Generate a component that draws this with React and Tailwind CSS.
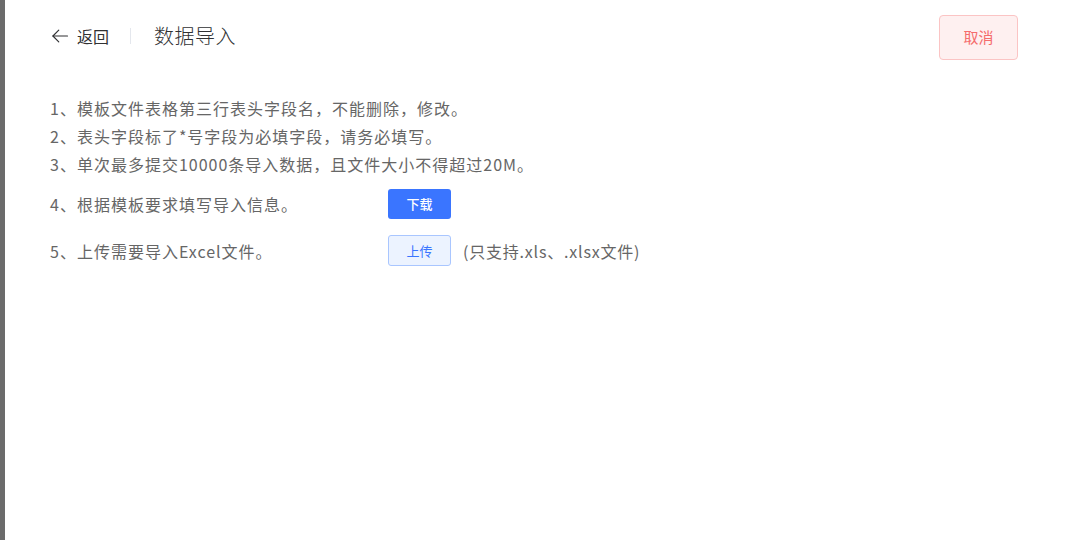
import React from "react";

const font = { fontFamily: '"Noto Sans CJK SC", "Noto Sans", sans-serif' };

function BackArrow() {
    return (
        <svg width="20" height="20" viewBox="0 0 24 24" fill="none" stroke="#303133" strokeWidth="1.4" strokeLinecap="round" strokeLinejoin="round">
            <path d="M21 12H3.5" />
            <path d="M10.5 5l-7 7 7 7" />
        </svg>
    );
}

export default function App() {
    const rules = [
        "1、模板文件表格第三行表头字段名，不能删除，修改。",
        "2、表头字段标了*号字段为必填字段，请务必填写。",
        "3、单次最多提交10000条导入数据，且文件大小不得超过20M。",
    ];

    return (
        <div className="flex w-[1065px] h-[540px] bg-white" style={font}>
            {/* mask edge */}
            <div className="w-[5px] h-full bg-[#6b6b6b]"></div>

            <div className="flex-1 flex flex-col">
                {/* Header */}
                <div className="flex items-center h-[72px] pl-[45px] pr-[47px]">
                    <button className="flex items-center gap-[7px] text-[16px] text-[#303133]">
                        <BackArrow />
                        <span>返回</span>
                    </button>
                    <div className="w-px h-[16px] bg-[#e4e7ed] ml-[21px] mr-[23px]"></div>
                    <div className="text-[20px] font-light text-[#303133] tracking-[0.5px]">数据导入</div>
                    <button className="ml-auto self-start mt-[15px] w-[79px] h-[45px] rounded-[4px] border border-[#fbc4c4] bg-[#fef0f0] text-[15px] text-[#f56c6c]">
                        取消
                    </button>
                </div>

                {/* Rules */}
                <div className="pl-[45px] mt-[22px] text-[16px] tracking-[1px] text-[#666666]">
                    {rules.map((r) => (
                        <div key={r} className="h-[28px] leading-[28px]">{r}</div>
                    ))}

                    <div className="flex items-center h-[30px] mt-[11px]">
                        <div className="w-[338px]">4、根据模板要求填写导入信息。</div>
                        <button className="w-[63px] h-[30px] rounded-[3px] bg-[#3a75ff] text-white text-[13px] font-medium tracking-normal">
                            下载
                        </button>
                    </div>

                    <div className="flex items-center h-[31px] mt-[16px]">
                        <div className="w-[338px]">5、上传需要导入Excel文件。</div>
                        <button className="w-[63px] h-[31px] rounded-[3px] border border-[#a9c6ff] bg-[#ecf3ff] text-[#3a75ff] text-[13px] tracking-normal">
                            上传
                        </button>
                        <span className="ml-[12px] tracking-[0.8px]">(只支持.xls、.xlsx文件)</span>
                    </div>
                </div>
            </div>
        </div>
    );
}
